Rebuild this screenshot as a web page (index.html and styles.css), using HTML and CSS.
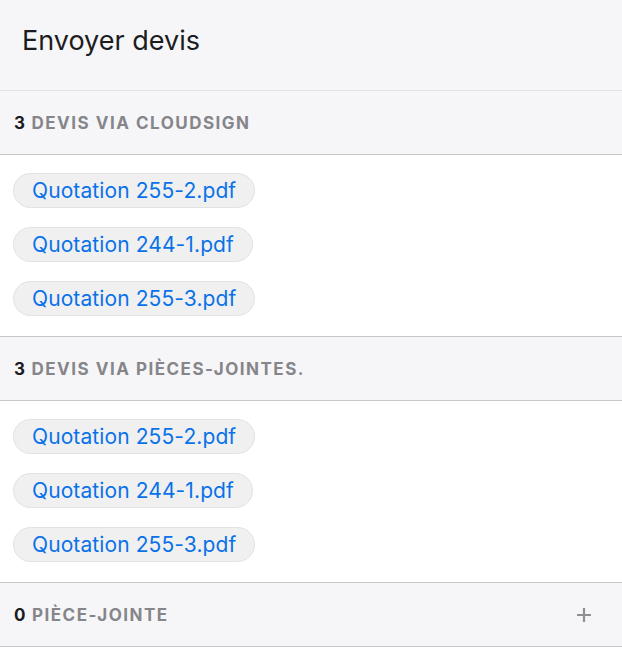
FILE: index.html
```html
<!DOCTYPE html>
<html lang="fr">
<head>
<meta charset="utf-8">
<title>Envoyer devis</title>
<link rel="stylesheet" href="styles.css">
</head>
<body>
<div class="page">
  <header class="top">Envoyer devis</header>
  <div class="sect"><span class="count">3</span>&nbsp;<span class="label">Devis via CloudSign</span></div>
  <div class="chips">
    <span class="chip">Quotation 255-2.pdf</span>
    <span class="chip">Quotation 244-1.pdf</span>
    <span class="chip">Quotation 255-3.pdf</span>
  </div>
  <div class="sect"><span class="count">3</span>&nbsp;<span class="label">Devis via pièces-jointes.</span></div>
  <div class="chips">
    <span class="chip">Quotation 255-2.pdf</span>
    <span class="chip">Quotation 244-1.pdf</span>
    <span class="chip">Quotation 255-3.pdf</span>
  </div>
  <div class="sect"><span class="count">0</span>&nbsp;<span class="label">Pièce-jointe</span>
    <svg class="plus" width="16" height="16" viewBox="0 0 16 16"><path d="M8 1v14M1 8h14" stroke="#8e8e93" stroke-width="2.2" fill="none"/></svg>
  </div>
</div>
</body>
</html>
```
FILE: styles.css
```css
* { box-sizing: border-box; }
html, body { margin: 0; padding: 0; background: #ffffff; }
body { font-family: Inter, "Noto Sans", sans-serif; }
.page { width: 622px; }
.top {
  height: 91px;
  background: #f6f6f8;
  border-bottom: 1px solid #e2e2e6;
  padding: 24px 0 0 22px;
  font-size: 27px;
  color: #1c1c1e;
  line-height: 33px;
}
.sect {
  height: 64px;
  background: #f6f6f8;
  border-bottom: 1px solid #c6c6cb;
  display: flex;
  align-items: center;
  padding: 0 30px 0 14px;
  font-size: 17px;
  font-weight: 700;
  letter-spacing: 1.5px;
  text-transform: uppercase;
}
.count { color: #1c1c1e; letter-spacing: 0; margin-right: 1px; }
.label { color: #85858a; flex: 1; }
.plus { display: block; margin-top: 1px; }
.chips {
  border-bottom: 1px solid #c6c6cb;
  padding: 18px 0 20px 13px;
  display: flex;
  flex-direction: column;
  align-items: flex-start;
  gap: 19px;
  height: 182px;
}
.chip {
  height: 35px;
  padding: 0 18px 0 18px;
  border: 1px solid #e2e2e4;
  background: #f0f0f1;
  border-radius: 18px;
  display: flex;
  align-items: center;
  color: #0a72e8;
  font-size: 21px;
  letter-spacing: 0.1px;
  line-height: 1;
}
```
